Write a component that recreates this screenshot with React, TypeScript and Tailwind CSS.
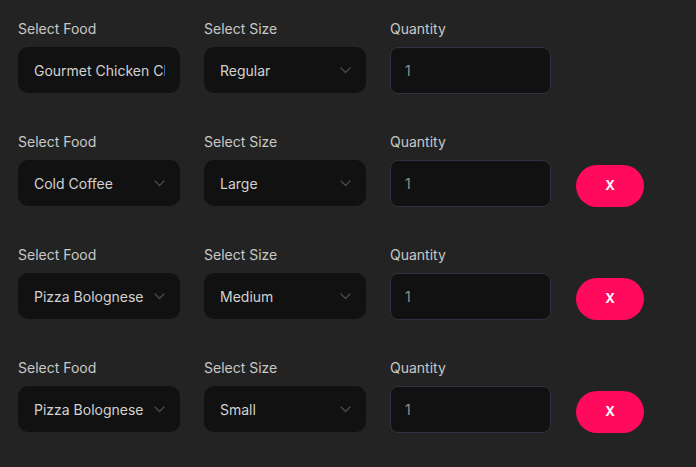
import { useState } from "react";

type Row = {
  food: string;
  size: string;
  qty: string;
};

const initialRows: Row[] = [
  { food: "Gourmet Chicken Cheese Burger", size: "Regular", qty: "1" },
  { food: "Cold Coffee", size: "Large", qty: "1" },
  { food: "Pizza Bolognese", size: "Medium", qty: "1" },
  { food: "Pizza Bolognese", size: "Small", qty: "1" },
];

function Chevron() {
  return (
    <svg width="11" height="7" viewBox="0 0 11 7" fill="none" className="shrink-0">
      <path d="M1 1l4.5 4.5L10 1" stroke="#4a4a4a" strokeWidth="1.3" strokeLinecap="round" strokeLinejoin="round" />
    </svg>
  );
}

function FakeSelect({ value, arrow }: { value: string; arrow: boolean }) {
  return (
    <div className="flex h-[46px] w-[162px] items-center rounded-[10px] bg-[#111111] pl-4 pr-[15px] text-[14px] text-[#d2d2d2]">
      <span className="flex-1 overflow-hidden whitespace-nowrap">{value}</span>
      {arrow && <Chevron />}
    </div>
  );
}

export default function App() {
  const [rows, setRows] = useState(initialRows);

  return (
    <div
      className="min-h-[467px] w-full bg-[#232323] px-[18px] pt-[19px]"
      style={{ fontFamily: "Inter, 'Noto Sans', sans-serif" }}
    >
      {rows.map((r, i) => (
        <div key={i} className="mb-[38px] flex gap-6">
          <div>
            <div className="mb-2 h-5 text-[14px] leading-5 text-[#c8c8c8]">Select Food</div>
            <FakeSelect value={r.food} arrow={i !== 0} />
          </div>

          <div>
            <div className="mb-2 h-5 text-[14px] leading-5 text-[#c8c8c8]">Select Size</div>
            <FakeSelect value={r.size} arrow />
          </div>

          <div>
            <div className="mb-2 h-5 text-[14px] leading-5 text-[#c8c8c8]">Quantity</div>
            <input
              value={r.qty}
              onChange={(e) =>
                setRows(rows.map((x, j) => (j === i ? { ...x, qty: e.target.value } : x)))
              }
              className="h-[47px] w-[161px] rounded-[8px] border border-[#2e3240] bg-[#111111] px-[14px] text-[14px] text-[#8f8f8f] outline-none"
            />
          </div>

          {i !== 0 && (
            <button
              onClick={() => setRows(rows.filter((_, j) => j !== i))}
              className="ml-px mt-[33px] h-[42px] w-[68px] rounded-full bg-[#ff0a5c] text-[13px] font-bold text-white"
            >
              X
            </button>
          )}
        </div>
      ))}
    </div>
  );
}
